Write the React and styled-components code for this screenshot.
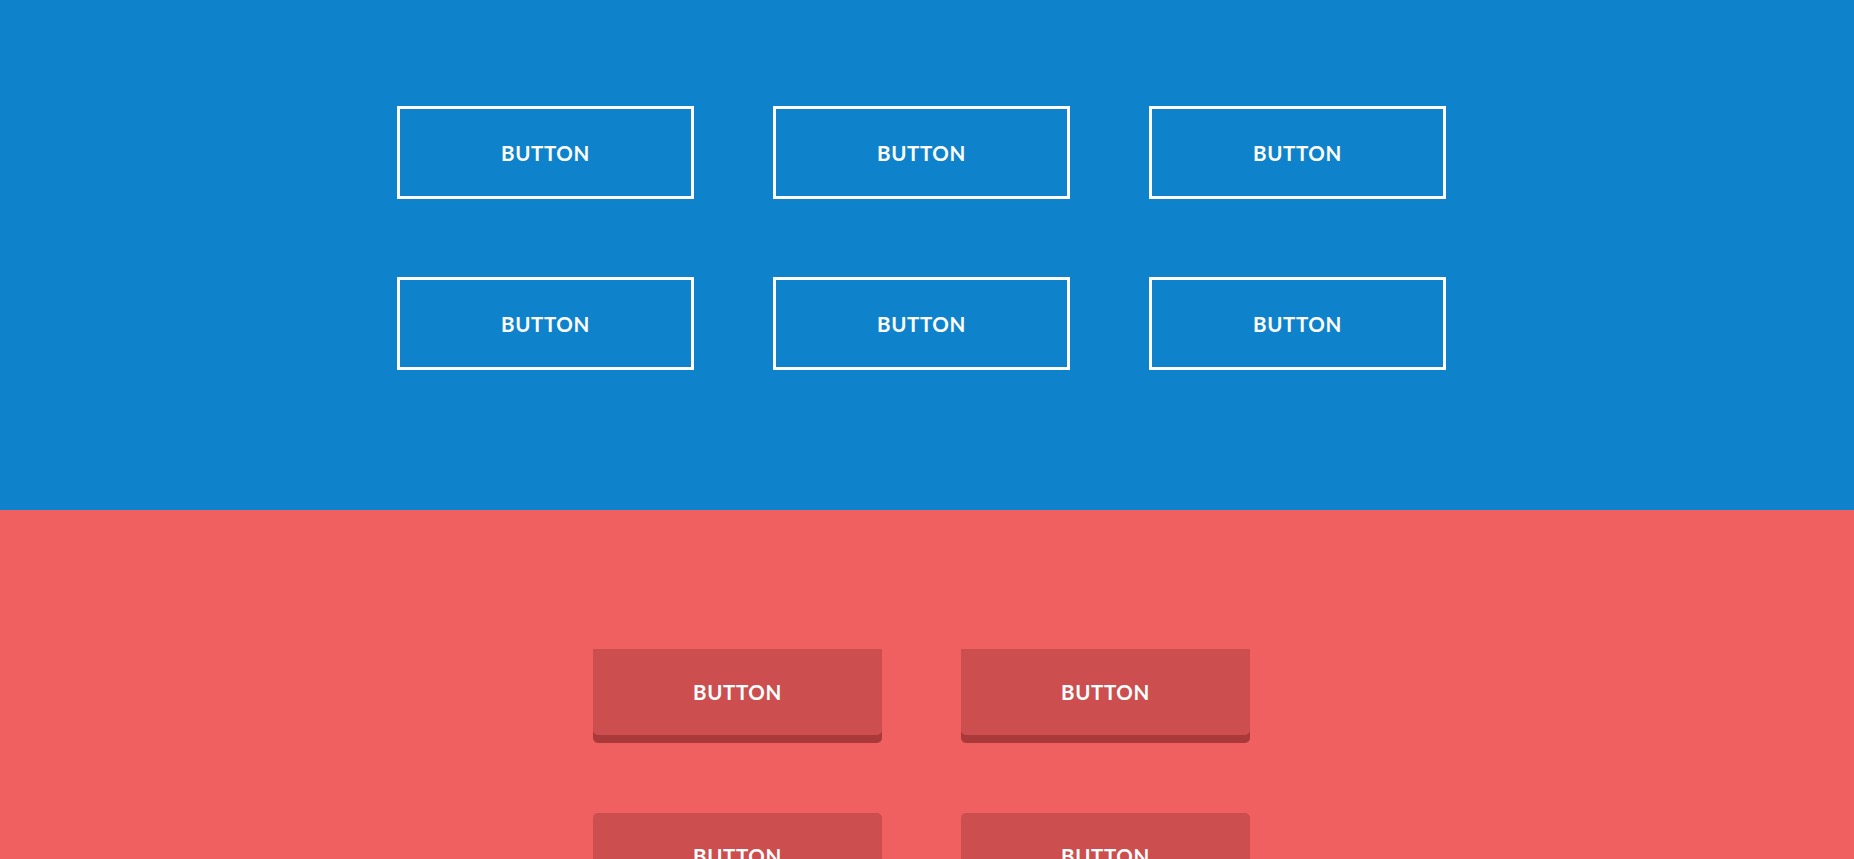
import React from "react";
import styled, { createGlobalStyle } from "styled-components";

const GlobalStyle = createGlobalStyle`
  html, body {
    margin: 0;
    padding: 0;
  }
  body {
    font-family: Lato, "Open Sans", Arial, sans-serif;
    background: #f06060;
  }
`;

const Section = styled.section`
  background: ${(p) => p.bg};
  padding: ${(p) => p.pad};
  padding-right: 11px;
  display: flex;
  flex-direction: column;
  align-items: center;
  gap: 78px;
`;

const Row = styled.div`
  display: flex;
  gap: 79px;
`;

const GhostButton = styled.button`
  width: 297px;
  height: 93px;
  box-sizing: border-box;
  padding: 0;
  background: transparent;
  border: 3px solid #fff;
  color: #fff;
  font-family: Lato, "Open Sans", sans-serif;
  font-weight: 700;
  font-size: 20.5px;
  letter-spacing: 0.6px;
  text-transform: uppercase;
  cursor: pointer;
  &:hover {
    background: #fff;
    color: #0e83cc;
  }
`;

const SolidButton = styled.button`
  width: 289px;
  height: 86px;
  box-sizing: border-box;
  padding: 0;
  background: #cc4e4e;
  border: none;
  border-radius: ${(p) => (p.$pressed ? "0 0 5px 5px" : "5px")};
  box-shadow: 0 8px 0 #aa3939;
  color: #fff;
  font-family: Lato, "Open Sans", sans-serif;
  font-weight: 700;
  font-size: 20.5px;
  letter-spacing: 0.6px;
  text-transform: uppercase;
  cursor: pointer;
`;

const ghostRows = [
  ["Button", "Button", "Button"],
  ["Button", "Button", "Button"],
];

const solidRows = [
  ["Button", "Button"],
  ["Button", "Button"],
];

export default function App() {
  return (
    <>
      <GlobalStyle />
      <Section bg="#0e83cc" pad="106px 0 140px">
        {ghostRows.map((row, i) => (
          <Row key={i}>
            {row.map((label, j) => (
              <GhostButton key={j}>{label}</GhostButton>
            ))}
          </Row>
        ))}
      </Section>
      <Section bg="#f06060" pad="139px 0 140px">
        {solidRows.map((row, i) => (
          <Row key={i}>
            {row.map((label, j) => (
              <SolidButton key={j} $pressed={i === 0}>
                {label}
              </SolidButton>
            ))}
          </Row>
        ))}
      </Section>
    </>
  );
}
